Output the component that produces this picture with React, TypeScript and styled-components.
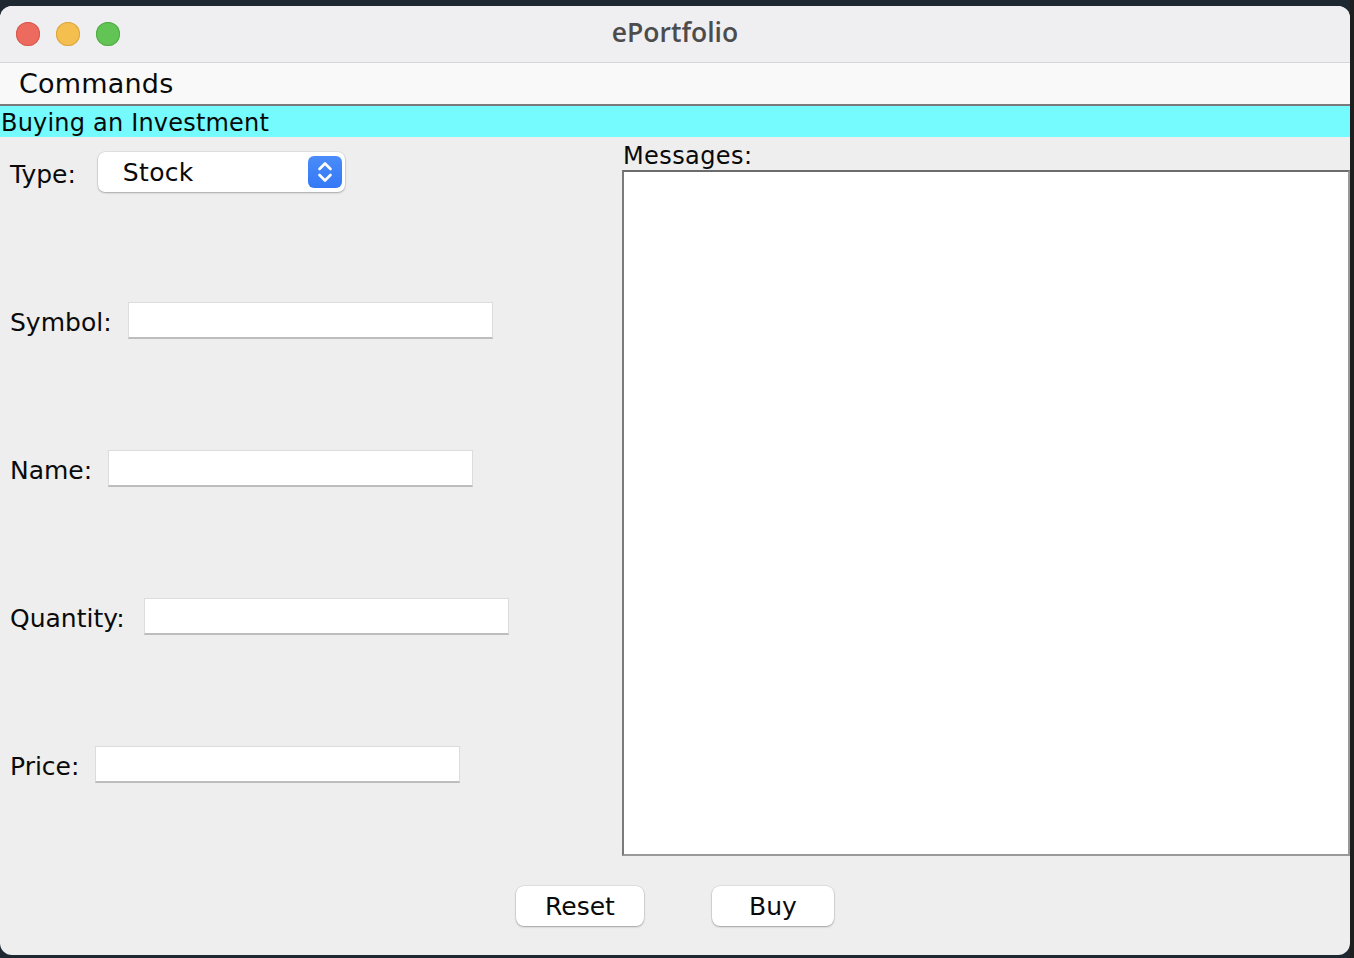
import React from "react";
import styled, { createGlobalStyle } from "styled-components";

const GlobalStyle = createGlobalStyle`
  html, body {
    margin: 0;
    padding: 0;
    background: #1d2830;
  }
  body {
    font-family: "DejaVu Sans", "Liberation Sans", sans-serif;
  }
`;

const Page = styled.div`
  width: 1354px;
  height: 958px;
  padding-top: 6px;
  box-sizing: border-box;
  background: linear-gradient(90deg, #1d2830 0, #1d2830 1350px, #1e1e1e 1350px);
`;

const Window = styled.div`
  width: 1350px;
  height: 949px;
  border-radius: 12px;
  overflow: hidden;
  background: #eeeeee;
  display: flex;
  flex-direction: column;
`;

const TitleBar = styled.div`
  height: 56px;
  flex: none;
  background: #efeff1;
  border-bottom: 1px solid #d6d6d8;
  display: grid;
  grid-template-columns: 1fr auto 1fr;
  align-items: center;
  padding: 0 16px;
`;

const Lights = styled.div`
  display: flex;
  gap: 16px;
`;

const Light = styled.span<{ color: string; rim: string }>`
  width: 24px;
  height: 24px;
  border-radius: 50%;
  background: ${(p) => p.color};
  box-shadow: inset 0 0 0 1px ${(p) => p.rim};
`;

const Title = styled.div`
  font-family: "Open Sans", "Liberation Sans", sans-serif;
  font-weight: 600;
  font-size: 26.5px;
  color: #4c4c4c;
  margin-top: -4px;
`;

const MenuBar = styled.div`
  height: 41px;
  flex: none;
  background: #f9f9f9;
  border-bottom: 2px solid #7a7a7a;
  display: flex;
  align-items: center;
  padding-left: 19px;
`;

const MenuItem = styled.span`
  font-size: 27px;
  letter-spacing: 0.2px;
  color: #0a0a0a;
`;

const Banner = styled.div`
  height: 31px;
  flex: none;
  box-sizing: border-box;
  background: #75fbfd;
  font-size: 24px;
  letter-spacing: 0.2px;
  line-height: 31px;
  padding: 2px 0 0 1px;
  color: #0a0a0a;
`;

const Body = styled.div`
  display: grid;
  grid-template-columns: 622px 1fr;
  height: 719px;
  flex: none;
`;

const Form = styled.div`
  display: flex;
  flex-direction: column;
  gap: 108px;
  padding: 15px 0 0 10px;
`;

const Row = styled.div`
  display: flex;
  align-items: center;
  height: 40px;
  gap: 16px;
`;

const Label = styled.span`
  font-size: 25px;
  color: #0a0a0a;
  margin-top: 4px;
`;

const Combo = styled.div`
  width: 247px;
  height: 40px;
  box-sizing: border-box;
  margin-left: 6px;
  background: #fff;
  border-radius: 7px;
  box-shadow: 0 0 0 0.5px rgba(0, 0, 0, 0.12), 0 1px 2px rgba(0, 0, 0, 0.25);
  display: flex;
  align-items: center;
  justify-content: space-between;
  padding: 0 3px 0 25px;
`;

const ComboText = styled.span`
  font-size: 25px;
  letter-spacing: 0.3px;
  color: #0a0a0a;
`;

const Stepper = styled.span`
  width: 34px;
  height: 32px;
  border-radius: 6px;
  background: linear-gradient(180deg, #4a8cf8, #3478f6);
  display: flex;
  align-items: center;
  justify-content: center;
`;

const TextBox = styled.div<{ shift?: number }>`
  width: 365px;
  height: 37px;
  box-sizing: border-box;
  margin-left: ${(p) => p.shift ?? 0}px;
  background: #fff;
  border: 1px solid #dcdcdc;
  border-bottom: 2px solid #bdbdbd;
`;

const MessagesPane = styled.div`
  display: flex;
  flex-direction: column;
  padding-top: 4px;
`;

const MessagesLabel = styled.span`
  font-size: 24px;
  letter-spacing: 0.4px;
  line-height: 29px;
  color: #0a0a0a;
  padding: 1px 0 0 1px;
  margin-bottom: -1px;
`;

const MessageArea = styled.div`
  height: 686px;
  box-sizing: border-box;
  background: #fff;
  border: 2px solid #999;
  border-top-color: #6c6c6c;
  border-left-color: #7a7a7a;
`;

const ButtonRow = styled.div`
  flex: 1;
  display: flex;
  justify-content: center;
  gap: 68px;
  padding-top: 30px;
`;

const Button = styled.button<{ w: number }>`
  width: ${(p) => p.w}px;
  height: 40px;
  border: none;
  border-radius: 8px;
  background: #fff;
  box-shadow: 0 0 0 0.5px rgba(0, 0, 0, 0.12), 0 1px 2px rgba(0, 0, 0, 0.28);
  font-family: "DejaVu Sans", "Liberation Sans", sans-serif;
  font-size: 25px;
  color: #0a0a0a;
  padding: 0;
`;

const fields = [
  { label: "Symbol:", shift: 0 },
  { label: "Name:", shift: 0 },
  { label: "Quantity:", shift: 3 },
  { label: "Price:", shift: 0 },
];

const App = () => {
  return (
    <Page>
      <GlobalStyle />
      <Window>
        <TitleBar>
          <Lights>
            <Light color="#ed6a5e" rim="#d65a4f" />
            <Light color="#f5bf4f" rim="#d9a53e" />
            <Light color="#61c454" rim="#52ab45" />
          </Lights>
          <Title>ePortfolio</Title>
          <div />
        </TitleBar>
        <MenuBar>
          <MenuItem>Commands</MenuItem>
        </MenuBar>
        <Banner>Buying an Investment</Banner>
        <Body>
          <Form>
            <Row>
              <Label>Type:</Label>
              <Combo>
                <ComboText>Stock</ComboText>
                <Stepper>
                  <svg width="34" height="32" viewBox="0 0 34 32">
                    <path
                      d="M11.5 13 L17 7.5 L22.5 13 M11.5 19 L17 24.5 L22.5 19"
                      fill="none"
                      stroke="#fff"
                      strokeWidth="2.6"
                      strokeLinecap="round"
                      strokeLinejoin="round"
                    />
                  </svg>
                </Stepper>
              </Combo>
            </Row>
            {fields.map((f) => (
              <Row key={f.label}>
                <Label>{f.label}</Label>
                <TextBox shift={f.shift} />
              </Row>
            ))}
          </Form>
          <MessagesPane>
            <MessagesLabel>Messages:</MessagesLabel>
            <MessageArea />
          </MessagesPane>
        </Body>
        <ButtonRow>
          <Button w={128}>Reset</Button>
          <Button w={122}>Buy</Button>
        </ButtonRow>
      </Window>
    </Page>
  );
};

export default App;
